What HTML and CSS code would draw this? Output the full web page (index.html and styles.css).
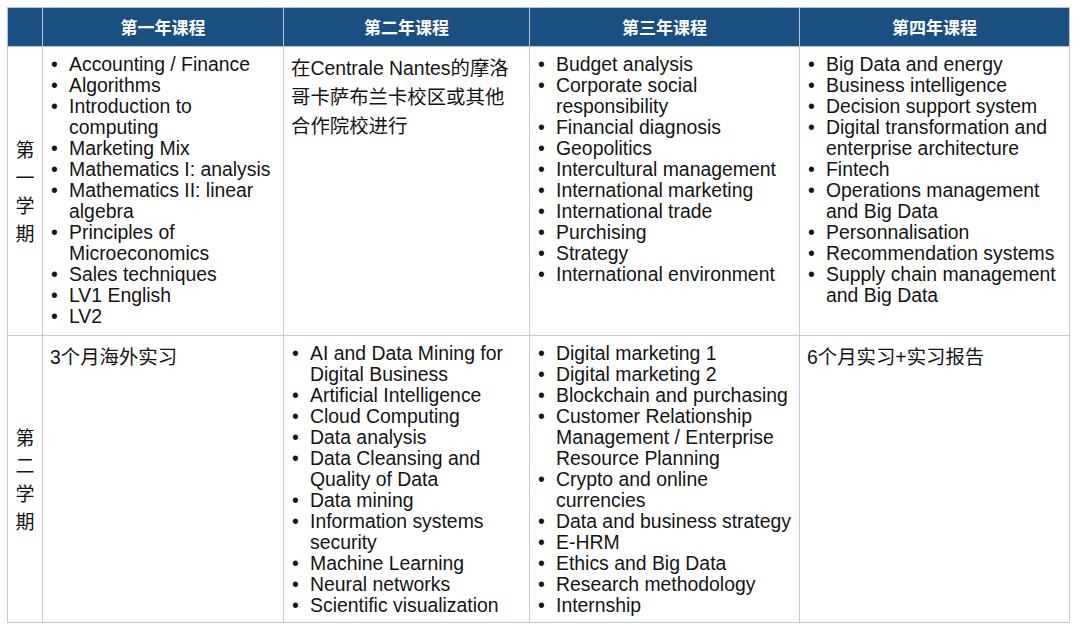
FILE: index.html
```html
<!DOCTYPE html>
<html lang="zh">
<head>
<meta charset="utf-8">
<link rel="stylesheet" href="styles.css">
</head>
<body>
<div class="page">
<table class="curriculum">
  <colgroup>
    <col class="c-side">
    <col class="c-y1">
    <col class="c-y2">
    <col class="c-y3">
    <col class="c-y4">
  </colgroup>
  <thead>
    <tr class="head">
      <th></th>
      <th>第一年课程</th>
      <th>第二年课程</th>
      <th>第三年课程</th>
      <th>第四年课程</th>
    </tr>
  </thead>
  <tbody>
    <tr class="r1">
      <td class="side"><span>第</span><span>一</span><span>学</span><span>期</span></td>
      <td>
        <ul>
          <li>Accounting / Finance</li>
          <li>Algorithms</li>
          <li>Introduction to computing</li>
          <li>Marketing Mix</li>
          <li>Mathematics I: analysis</li>
          <li>Mathematics II: linear algebra</li>
          <li>Principles of Microeconomics</li>
          <li>Sales techniques</li>
          <li>LV1 English</li>
          <li>LV2</li>
        </ul>
      </td>
      <td><p class="cn">在Centrale Nantes的摩洛<br>哥卡萨布兰卡校区或其他<br>合作院校进行</p></td>
      <td>
        <ul>
          <li>Budget analysis</li>
          <li>Corporate social responsibility</li>
          <li>Financial diagnosis</li>
          <li>Geopolitics</li>
          <li>Intercultural management</li>
          <li>International marketing</li>
          <li>International trade</li>
          <li>Purchising</li>
          <li>Strategy</li>
          <li>International environment</li>
        </ul>
      </td>
      <td>
        <ul>
          <li>Big Data and energy</li>
          <li>Business intelligence</li>
          <li>Decision support system</li>
          <li>Digital transformation and enterprise architecture</li>
          <li>Fintech</li>
          <li>Operations management and Big Data</li>
          <li>Personnalisation</li>
          <li>Recommendation systems</li>
          <li>Supply chain management and Big Data</li>
        </ul>
      </td>
    </tr>
    <tr class="r2">
      <td class="side"><span>第</span><span>二</span><span>学</span><span>期</span></td>
      <td><p class="cn">3个月海外实习</p></td>
      <td>
        <ul>
          <li>AI and Data Mining for Digital Business</li>
          <li>Artificial Intelligence</li>
          <li>Cloud Computing</li>
          <li>Data analysis</li>
          <li>Data Cleansing and Quality of Data</li>
          <li>Data mining</li>
          <li>Information systems security</li>
          <li>Machine Learning</li>
          <li>Neural networks</li>
          <li>Scientific visualization</li>
        </ul>
      </td>
      <td>
        <ul>
          <li>Digital marketing 1</li>
          <li>Digital marketing 2</li>
          <li>Blockchain and purchasing</li>
          <li>Customer Relationship Management / Enterprise Resource Planning</li>
          <li>Crypto and online currencies</li>
          <li>Data and business strategy</li>
          <li>E-HRM</li>
          <li>Ethics and Big Data</li>
          <li>Research methodology</li>
          <li>Internship</li>
        </ul>
      </td>
      <td><p class="cn">6个月实习+实习报告</p></td>
    </tr>
  </tbody>
</table>
</div>
</body>
</html>
```
FILE: styles.css
```css
html, body {
  margin: 0;
  padding: 0;
  background: #ffffff;
}
.page {
  padding: 7px 0 0 7px;
}
.curriculum {
  border-collapse: collapse;
  table-layout: fixed;
  width: 1062px;
  font-family: "Liberation Sans", "Noto Sans CJK SC", Arial, sans-serif;
  font-size: 19.4px;
  color: #141414;
}
.c-side { width: 35px; }
.c-y1 { width: 241px; }
.c-y2 { width: 246px; }
.c-y3 { width: 270px; }
.c-y4 { width: 270px; }

.curriculum th,
.curriculum td {
  border: 1px solid #c9c9c9;
  padding: 0;
}
.head {
  height: 39px;
}
.head th {
  background: #1a4f82;
  color: #ffffff;
  font-family: "Noto Sans CJK SC", "Liberation Sans", sans-serif;
  font-weight: 700;
  font-size: 17px;
  line-height: 20px;
  text-align: center;
  vertical-align: middle;
  border-color: #b9c4cf;
}
.r1 { height: 289px; }
.r2 { height: 287px; }
.curriculum td {
  vertical-align: top;
  padding: 7px 3px 6px 7px;
}
.curriculum td.side {
  vertical-align: middle;
  padding: 0 0 1px 0;
  text-align: center;
  font-family: "Noto Sans CJK SC", sans-serif;
  font-size: 19px;
  line-height: 28px;
}
.side span {
  display: block;
}
ul {
  list-style: none;
  margin: 0;
  padding: 0;
}
li {
  position: relative;
  padding-left: 19px;
  line-height: 21px;
}
li::before {
  content: "•";
  position: absolute;
  left: 1px;
  top: 0;
}
.cn {
  margin: 0;
  line-height: 29px;
  font-family: "Liberation Sans", "Noto Sans CJK SC", sans-serif;
}
```
